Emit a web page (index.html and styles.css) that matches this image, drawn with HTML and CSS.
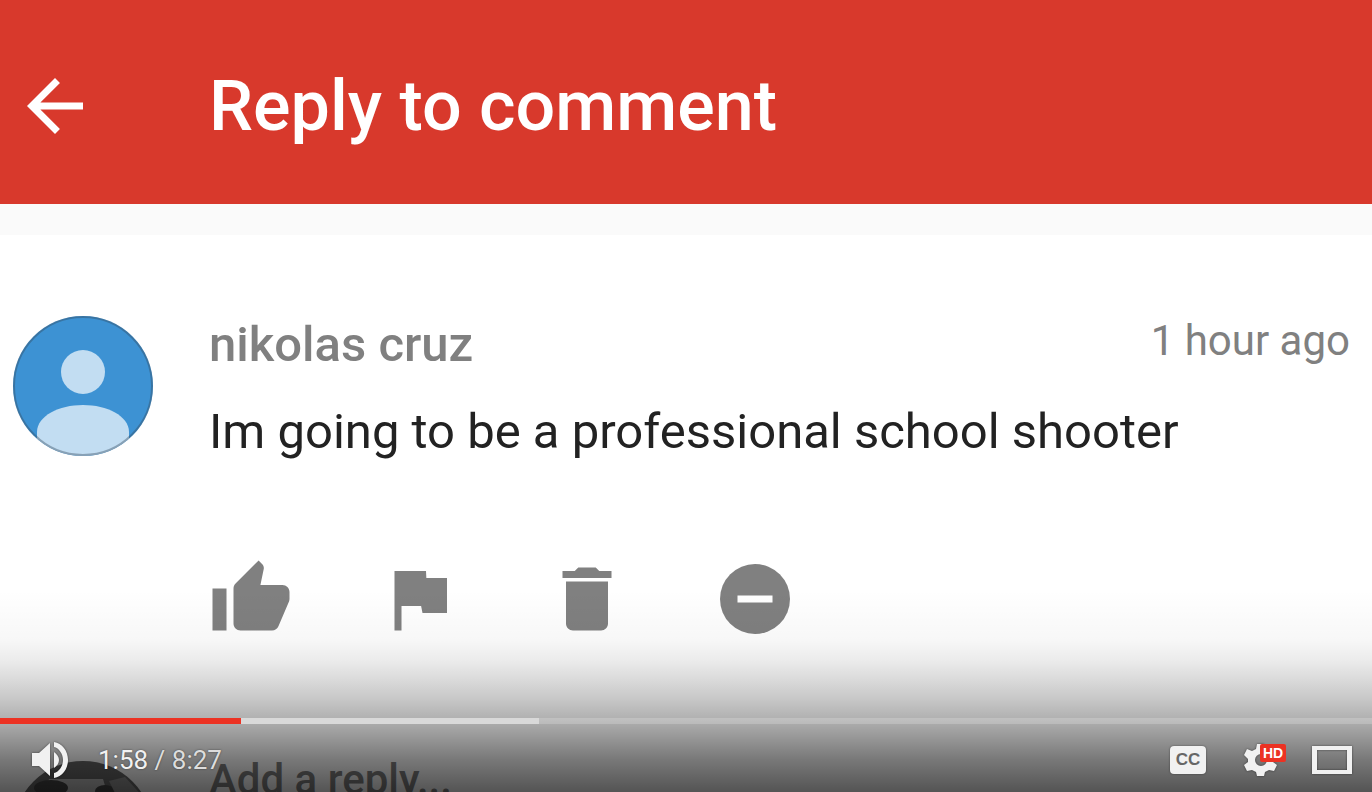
FILE: index.html
```
<!DOCTYPE html>
<html lang="en">
<head>
  <meta charset="UTF-8" />
  <title>Reply to comment</title>
  <meta name="viewport" content="width=device-width, initial-scale=1.0" />
  <link rel="stylesheet" href="styles.css">
</head>
<body>
  <div class="player">
    <main class="video">
      <header class="app-bar">
        <button class="icon-btn" aria-label="Back">
          <svg class="icon" viewBox="0 0 24 24"><path d="M20 11H7.83l5.59-5.59L12 4l-8 8 8 8 1.41-1.41L7.83 13H20z"/></svg>
        </button>
        <h1>Reply to comment</h1>
      </header>

      <article class="comment">
        <svg class="avatar" viewBox="0 0 140 140">
          <defs>
            <clipPath id="round"><circle cx="70" cy="70" r="70"/></clipPath>
          </defs>
          <g clip-path="url(#round)">
            <rect width="140" height="140" fill="#3d92d3"/>
            <circle cx="70" cy="56" r="22" fill="#c2ddf2"/>
            <path d="M24 140v-24c0-16 22-27 46-27s46 11 46 27v24z" fill="#c2ddf2"/>
          </g>
          <circle cx="70" cy="70" r="69" fill="none" stroke="#33495c" stroke-opacity=".4" stroke-width="2"/>
        </svg>
        <div class="comment-body">
          <div class="comment-head">
            <span class="author">nikolas cruz</span>
            <span class="time">1 hour ago</span>
          </div>
          <p class="text">Im going to be a professional school shooter</p>
          <div class="actions">
            <button class="icon-btn" aria-label="Like">
              <svg class="icon" viewBox="0 0 24 24"><path d="M1 21h4V9H1v12zm22-11c0-1.100-.9-2-2-2h-6.310l.95-4.570.03-.32c0-.41-.17-.79-.44-1.060L14.170 1 7.590 7.590C7.220 7.950 7 8.450 7 9v10c0 1.100.9 2 2 2h9c.83 0 1.540-.5 1.840-1.220l3.020-7.050c.09-.23.14-.47.14-.73v-2z"/></svg>
            </button>
            <button class="icon-btn" aria-label="Report">
              <svg class="icon" viewBox="0 0 24 24"><path d="M14.100 6L14 4H5v17h2v-7h5.600l.4 2h7V6z"/></svg>
            </button>
            <button class="icon-btn" aria-label="Delete">
              <svg class="icon" viewBox="0 0 24 24"><path d="M6 19c0 1.100.9 2 2 2h8c1.100 0 2-.9 2-2V7H6v12zM19 4h-3.500l-1-1h-5l-1 1H5v2h14V4z"/></svg>
            </button>
            <button class="icon-btn" aria-label="Hide user">
              <svg class="icon" viewBox="0 0 24 24"><circle cx="12" cy="12" r="10"/><path d="M7 11h10v2H7z" fill="#fff"/></svg>
            </button>
          </div>
        </div>
      </article>

      <div class="reply">
        <svg class="avatar" viewBox="0 0 140 140">
          <g clip-path="url(#round)">
            <rect width="140" height="140" fill="#666"/>
            <path d="M36 18h54l12 40H22z" fill="#bbb"/>
            <ellipse cx="38" cy="27" rx="17" ry="8" fill="#444"/>
            <ellipse cx="92" cy="30" rx="10" ry="6" fill="#444"/>
            <path d="M96 20l16-4 20 22-30-6z" fill="#909090"/>
          </g>
        </svg>
        <input type="text" aria-label="Reply" placeholder="Add a reply...">
      </div>
    </main>

    <div class="chrome">
      <div class="progress">
        <div class="loaded" style="width: 39.3%"></div>
        <div class="played" style="width: 17.55%"></div>
      </div>
      <div class="controls">
        <button class="ctl" aria-label="Mute">
          <svg width="40" height="40" viewBox="0 0 40 40">
            <path d="M2 13h7L20 3v33L9 26H2z"/>
            <path d="M24 12c3 2 5 5 5 8s-2 6-5 8z"/>
            <path d="M24 2c8 1 14 9 14 18s-6 17-14 18v-5c5-1 9-7 9-13s-4-12-9-13z"/>
          </svg>
        </button>
        <span class="clock">1:58 <span class="total">/ 8:27</span></span>
        <button class="ctl cc" aria-label="Subtitles">CC</button>
        <button class="ctl settings" aria-label="Settings">
          <svg width="34" height="32" viewBox="0 0 34 32">
            <path fill-rule="evenodd" d="M13 0h7l1 5 3 2 5-2 4 6-4 4v3l4 3-3 6-5-1-4 2-1 4h-7l-1-4-4-2-5 1-3-6 4-3v-3l-4-4 3-6 5 2 4-2zM17 10a6 6 0 1 0 0 12 6 6 0 0 0 0-12z"/>
          </svg>
          <span class="hd">HD</span>
        </button>
        <button class="ctl" aria-label="Theater mode">
          <svg width="42" height="32" viewBox="0 0 42 32">
            <path fill-rule="evenodd" d="M1 2h40v28H1zM6 6v20h30V6z"/>
          </svg>
        </button>
      </div>
    </div>
  </div>
</body>
</html>
```
FILE: styles.css
```
:root {
  --red: #d8392c;
  --played: #ec3223;
  --grey: #808080;
  --text: #222;
  --light: #f1f1f1;
}
* {
  box-sizing: border-box;
}
body {
  margin: 0;
  font-family: Roboto, sans-serif;
  background: #fff;
  color: var(--text);
}
button {
  padding: 0;
  border: none;
  background: none;
  color: inherit;
  font-family: inherit;
  cursor: pointer;
}
.player {
  position: relative;
  height: 100vh;
  overflow: hidden;
}
.app-bar {
  display: flex;
  align-items: center;
  gap: 112px;
  padding: 63px 13px 55px;
  background: var(--red);
  color: #fff;
}
h1 {
  margin: 0;
  font-size: 70px;
  line-height: 86px;
  font-weight: 500;
  white-space: nowrap;
}
.icon-btn {
  flex: none;
  width: 84px;
  height: 84px;
}
.icon {
  display: block;
  width: 100%;
  height: 100%;
  fill: currentColor;
}
.comment {
  display: flex;
  gap: 56px;
  padding: 81px 22px 120px 13px;
  border-top: 31px solid #fafafa;
}
.avatar {
  flex: none;
  width: 140px;
  height: 140px;
}
.comment-body {
  flex: 1;
}
.comment-head {
  display: flex;
  justify-content: space-between;
  color: var(--grey);
}
.author {
  font-size: 49px;
  line-height: 58px;
  font-weight: 500;
}
.time {
  font-size: 42px;
  line-height: 50px;
}
.text {
  margin: 29px 0 96px;
  font-size: 49px;
  line-height: 58px;
}
.actions {
  display: flex;
  gap: 84px;
  color: var(--grey);
}
.reply {
  display: flex;
  gap: 56px;
  padding: 0 13px;
}
.reply input {
  flex: 1;
  height: 36px;
  padding: 0;
  border: none;
  background: none;
  font: 500 42px/36px Roboto, sans-serif;
}
.reply input::placeholder {
  color: #808080;
  opacity: 1;
}

/* player controls over the video */
.chrome {
  position: absolute;
  left: 0;
  right: 0;
  bottom: 0;
  padding-top: 128px;
  background: linear-gradient(rgba(0, 0, 0, 0), rgba(0, 0, 0, 0.03) 25%, rgba(0, 0, 0, 0.08) 35%, rgba(0, 0, 0, 0.15) 45%, rgba(0, 0, 0, 0.22) 54%, rgba(0, 0, 0, 0.33) 66%, rgba(0, 0, 0, 0.53) 84%, rgba(0, 0, 0, 0.67));
}
.progress {
  display: grid;
  height: 6px;
  background: rgba(255, 255, 255, 0.2);
}
.loaded,
.played {
  grid-area: 1 / 1;
}
.loaded {
  background: #d9d9d9;
}
.played {
  background: var(--played);
}
.controls {
  display: flex;
  align-items: center;
  height: 68px;
  padding: 4px 19px 0 30px;
  color: var(--light);
}
.ctl {
  flex: none;
}
.ctl svg {
  display: block;
  fill: currentColor;
  filter: drop-shadow(0 0 1px rgba(0, 0, 0, 0.5));
}
.clock {
  flex: 1;
  margin-left: 28px;
  font-size: 26px;
  line-height: 32px;
  text-shadow: 0 0 2px rgba(0, 0, 0, 0.5);
}
.total {
  color: #ddd;
}
.cc {
  width: 36px;
  height: 28px;
  margin-right: 38px;
  border-radius: 4px;
  background: var(--light);
  box-shadow: 0 0 2px rgba(0, 0, 0, 0.5);
  color: #666;
  font: bold 17px/28px "Liberation Sans", sans-serif;
}
.settings {
  position: relative;
  margin-right: 33px;
}
.hd {
  position: absolute;
  top: 0;
  left: 16px;
  width: 26px;
  border-radius: 2px;
  background: var(--played);
  color: #fff;
  font: bold 14px/18px "Liberation Sans", sans-serif;
}
```
